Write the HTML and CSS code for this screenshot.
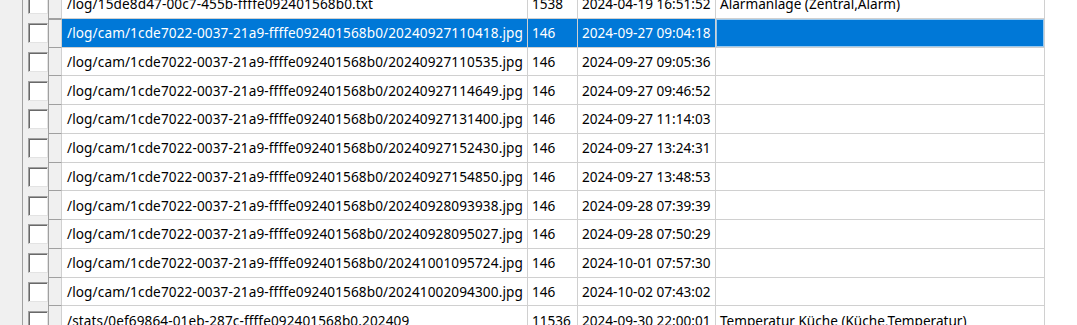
FILE: index.html
```html
<!DOCTYPE html>
<html>
<head>
  <meta charset="UTF-8">
  <title>Log files</title>
  <link rel="stylesheet" href="styles.css">
</head>
<body>

<div class="frame">
  <div class="side"></div>

  <div class="grid">
    <div class="row">
      <div class="check"><span class="box"></span></div>
      <div class="head"></div>
      <div class="cell name">/log/15de8d47-00c7-455b-ffffe092401568b0.txt</div>
      <div class="cell size">1538</div>
      <div class="cell date">2024-04-19 16:51:52</div>
      <div class="cell desc">Alarmanlage (Zentral,Alarm)</div>
    </div>
    <div class="row selected">
      <div class="check"><span class="box"></span></div>
      <div class="head"></div>
      <div class="cell name">/log/cam/1cde7022-0037-21a9-ffffe092401568b0/20240927110418.jpg</div>
      <div class="cell size">146</div>
      <div class="cell date">2024-09-27 09:04:18</div>
      <div class="cell desc current"></div>
    </div>
    <div class="row">
      <div class="check"><span class="box"></span></div>
      <div class="head"></div>
      <div class="cell name">/log/cam/1cde7022-0037-21a9-ffffe092401568b0/20240927110535.jpg</div>
      <div class="cell size">146</div>
      <div class="cell date">2024-09-27 09:05:36</div>
      <div class="cell desc"></div>
    </div>
    <div class="row">
      <div class="check"><span class="box"></span></div>
      <div class="head"></div>
      <div class="cell name">/log/cam/1cde7022-0037-21a9-ffffe092401568b0/20240927114649.jpg</div>
      <div class="cell size">146</div>
      <div class="cell date">2024-09-27 09:46:52</div>
      <div class="cell desc"></div>
    </div>
    <div class="row">
      <div class="check"><span class="box"></span></div>
      <div class="head"></div>
      <div class="cell name">/log/cam/1cde7022-0037-21a9-ffffe092401568b0/20240927131400.jpg</div>
      <div class="cell size">146</div>
      <div class="cell date">2024-09-27 11:14:03</div>
      <div class="cell desc"></div>
    </div>
    <div class="row">
      <div class="check"><span class="box"></span></div>
      <div class="head"></div>
      <div class="cell name">/log/cam/1cde7022-0037-21a9-ffffe092401568b0/20240927152430.jpg</div>
      <div class="cell size">146</div>
      <div class="cell date">2024-09-27 13:24:31</div>
      <div class="cell desc"></div>
    </div>
    <div class="row">
      <div class="check"><span class="box"></span></div>
      <div class="head"></div>
      <div class="cell name">/log/cam/1cde7022-0037-21a9-ffffe092401568b0/20240927154850.jpg</div>
      <div class="cell size">146</div>
      <div class="cell date">2024-09-27 13:48:53</div>
      <div class="cell desc"></div>
    </div>
    <div class="row">
      <div class="check"><span class="box"></span></div>
      <div class="head"></div>
      <div class="cell name">/log/cam/1cde7022-0037-21a9-ffffe092401568b0/20240928093938.jpg</div>
      <div class="cell size">146</div>
      <div class="cell date">2024-09-28 07:39:39</div>
      <div class="cell desc"></div>
    </div>
    <div class="row">
      <div class="check"><span class="box"></span></div>
      <div class="head"></div>
      <div class="cell name">/log/cam/1cde7022-0037-21a9-ffffe092401568b0/20240928095027.jpg</div>
      <div class="cell size">146</div>
      <div class="cell date">2024-09-28 07:50:29</div>
      <div class="cell desc"></div>
    </div>
    <div class="row">
      <div class="check"><span class="box"></span></div>
      <div class="head"></div>
      <div class="cell name">/log/cam/1cde7022-0037-21a9-ffffe092401568b0/20241001095724.jpg</div>
      <div class="cell size">146</div>
      <div class="cell date">2024-10-01 07:57:30</div>
      <div class="cell desc"></div>
    </div>
    <div class="row">
      <div class="check"><span class="box"></span></div>
      <div class="head"></div>
      <div class="cell name">/log/cam/1cde7022-0037-21a9-ffffe092401568b0/20241002094300.jpg</div>
      <div class="cell size">146</div>
      <div class="cell date">2024-10-02 07:43:02</div>
      <div class="cell desc"></div>
    </div>
    <div class="row">
      <div class="check"><span class="box"></span></div>
      <div class="head"></div>
      <div class="cell name">/stats/0ef69864-01eb-287c-ffffe092401568b0.202409</div>
      <div class="cell size">11536</div>
      <div class="cell date">2024-09-30 22:00:01</div>
      <div class="cell desc">Temperatur Küche (Küche,Temperatur)</div>
    </div>
  </div>
</div>

</body>
</html>
```

FILE: styles.css
```css
html, body {
  margin: 0;
  height: 100%;
  overflow: hidden;
  background: white;
}
body {
  font-family: "Noto Sans", "Open Sans", sans-serif;
  font-size: 13.6px;
  color: #000;
}
.frame {
  display: flex;
  height: 100%;
}
.side {
  width: 22px;
  flex: none;
  background: #f0f0f0;
  border-right: 1px solid #a0a0a0;
}
.grid {
  margin-top: -10px;
  display: flex;
  flex-direction: column;
}
.row {
  display: flex;
  height: 28.75px;
  flex: none;
}
.check {
  width: 26px;
  flex: none;
  background: #f0f0f0;
  display: flex;
  align-items: center;
  padding-left: 5px;
  box-sizing: border-box;
  border-right: 1px solid #a0a0a0;
}
.box {
  width: 20px;
  height: 20px;
  box-sizing: border-box;
  background: white;
  border: 1px solid;
  border-color: #a0a0a0 #e3e3e3 #e3e3e3 #a0a0a0;
  box-shadow: inset 1px 1px 0 #696969;
}
.head {
  width: 12px;
  flex: none;
  background: #f0f0f0;
  border-bottom: 1px solid #a0a0a0;
  border-right: 1px solid #d0d0d0;
}
.cell {
  box-sizing: border-box;
  flex: none;
  padding: 0 4px;
  display: flex;
  align-items: center;
  white-space: nowrap;
  overflow: hidden;
  background: white;
  border-right: 1px solid #d0d0d0;
  border-bottom: 1px solid #d0d0d0;
}
.name { width: 466px; padding-left: 5px; letter-spacing: 0.11px; }
.size { width: 50px; }
.date { width: 138px; }
.desc { width: 329px; }

.selected .cell {
  background: #0078d7;
  color: white;
}
.selected .head {
  border-top: 1px solid #a0a0a0;
}
.selected .current {
  box-shadow: inset 0 0 0 1px #99c9ef;
}
```
